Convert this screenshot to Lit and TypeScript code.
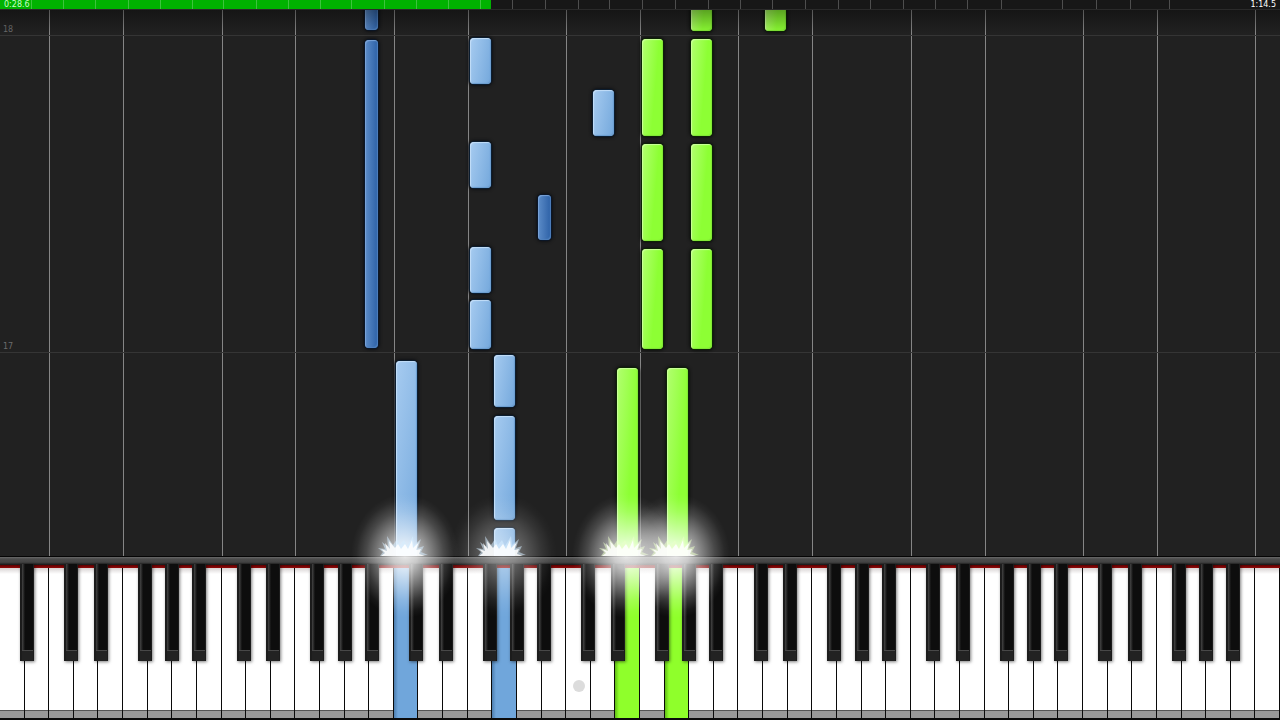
import { LitElement, html, svg, css } from "lit";
import { customElement, property } from "lit/decorators.js";
import { classMap } from "lit/directives/class-map.js";

const WHITE_COUNT = 52;
const HIT_Y = 556;
const SONG_SECONDS = 74.5;
const PLAYED_SECONDS = 28.6;

type Hand = "left" | "right";

interface Note {
  key: number; // white key index; for sharps the index of the key on the right
  sharp?: boolean;
  start: number; // distance above the hit line
  length: number;
  hand: Hand;
}

const note = (key: number, top: number, bottom: number, hand: Hand, sharp = false): Note => ({
  key,
  sharp,
  hand,
  start: HIT_Y - bottom,
  length: bottom - top,
});

const NOTES: Note[] = [
  note(15, -10, 30, "left", true),
  note(15, 40, 348, "left", true),
  note(22, 195, 240, "left", true),
  note(19, 38, 84, "left"),
  note(19, 142, 188, "left"),
  note(19, 247, 293, "left"),
  note(19, 300, 349, "left"),
  note(24, 90, 136, "left"),
  note(20, 355, 407, "left"),
  note(20, 416, 520, "left"),
  note(20, 528, 566, "left"),
  note(16, 361, 566, "left"),
  note(28, -10, 31, "right"),
  note(31, -10, 31, "right"),
  note(26, 39, 136, "right"),
  note(28, 39, 136, "right"),
  note(26, 144, 241, "right"),
  note(28, 144, 241, "right"),
  note(26, 249, 349, "right"),
  note(28, 249, 349, "right"),
  note(25, 368, 566, "right"),
  note(27, 368, 566, "right"),
];

const PRESSED = new Map<number, Hand>([
  [16, "left"],
  [20, "left"],
  [25, "right"],
  [27, "right"],
]);

const MEASURES = [
  31, 63, 95, 128, 160, 192, 223, 256, 288, 320, 351, 384, 416, 448, 480, 512, 545, 578, 609, 642,
  675, 708, 740, 772, 805, 838, 870, 903, 935, 967, 1001, 1062, 1096, 1130, 1169,
].map((x) => (x / 1280) * 100);

const BAR_LINES = [
  { label: "18", start: HIT_Y - 36 },
  { label: "17", start: HIT_Y - 353 },
];

const whites = Array.from({ length: WHITE_COUNT }, (_, i) => i);
// The lowest white key is an A, so index % 7 gives A B C D E F G.
const gridLines = whites.filter((i) => i % 7 === 2 || i % 7 === 5);
const sharpShift = [0, 2.5, 0, -2.5, 2.5, 0, -2.5];
const sharps = whites.filter((i) => i > 0 && i % 7 !== 2 && i % 7 !== 5);
const shiftOf = (i: number) => sharpShift[i % 7];
const percent = (i: number) => (i / WHITE_COUNT) * 100;

@customElement("song-progress")
class SongProgress extends LitElement {
  static styles = css`
    :host {
      display: block;
      position: relative;
      height: 10px;
      background: #171717;
      border-bottom: 1px solid #2a2a2a;
      box-sizing: border-box;
      color: #fff;
      font: 8px/10px "DejaVu Sans", sans-serif;
    }
    .bar {
      display: block;
      width: 100%;
      height: 9px;
      appearance: none;
      border: 0;
      background: #171717;
    }
    .bar::-webkit-progress-bar {
      background: #171717;
    }
    .bar::-webkit-progress-value {
      background: #00b200;
    }
    .tick {
      position: absolute;
      top: 0;
      width: 1px;
      height: 9px;
      background: #fff;
      opacity: 0.24;
    }
    .times {
      position: absolute;
      inset: 0;
      display: flex;
      justify-content: space-between;
      padding: 0 4px;
    }
    .elapsed {
      color: #c8ffc8;
    }
  `;

  render() {
    return html`
      <progress class="bar" aria-label="Song position" max=${SONG_SECONDS} value=${PLAYED_SECONDS}></progress>
      ${MEASURES.map((x) => html`<i class="tick" style="left:${x}%"></i>`)}
      <div class="times"><span class="elapsed">0:28.6</span><span>1:14.5</span></div>
    `;
  }
}

@customElement("note-roll")
class NoteRoll extends LitElement {
  static styles = css`
    :host {
      display: block;
      position: relative;
      overflow: hidden;
      background: #212121;
    }
    .lane {
      position: absolute;
      top: 0;
      bottom: 0;
      width: 1px;
      background: #858585;
    }
    .measure {
      position: absolute;
      left: 0;
      right: 0;
      box-sizing: border-box;
      padding-left: 3px;
      border-bottom: 1px solid #353535;
      color: #6c6c6c;
      font: 8px/11px "DejaVu Sans", sans-serif;
    }
    .note {
      position: absolute;
      width: 21px;
      margin-left: 2px;
      border-radius: 4px;
    }
    .note.sharp {
      width: 13px;
      margin-left: -4px;
    }
    .left {
      background: linear-gradient(100deg, #a6cbf0, #74a8dc);
      box-shadow: 0 0 0 1px #0b1d30, 0 0 3px 2px #101216, inset 1px 1px 1px #c4def8,
        inset -1px -1px 1px #6b9dcf;
    }
    .left.sharp {
      background: linear-gradient(90deg, #5c8cc8, #2c60a6);
      box-shadow: 0 0 0 1px #0a1628, 0 0 3px 2px #101216, inset 1px 1px 1px #7ba4d8,
        inset -1px -1px 1px #4f80bd;
    }
    .right {
      background: linear-gradient(95deg, #b2ff70, #8dff34 60%);
      box-shadow: 0 0 0 1px #0c2404, 0 0 3px 2px #101210, inset 1px 1px 1px #ceff9e,
        inset -1px -1px 1px #80e636;
    }
    .shade {
      position: absolute;
      inset: 0 0 auto;
      height: 24px;
      background: linear-gradient(rgba(0, 0, 0, 0.36), transparent);
    }
  `;

  render() {
    return html`
      ${gridLines.map((i) => html`<i class="lane" style="left:${percent(i)}%"></i>`)}
      ${BAR_LINES.map((b) => html`<div class="measure" style="bottom:${b.start}px">${b.label}</div>`)}
      ${NOTES.map(
        (n) => html`<div
          class=${classMap({ note: true, [n.hand]: true, sharp: !!n.sharp })}
          style="left:${percent(n.key)}%;bottom:${n.start}px;height:${n.length}px"
        ></div>`
      )}
      <div class="shade"></div>
    `;
  }
}

@customElement("piano-keyboard")
class PianoKeyboard extends LitElement {
  static styles = css`
    :host {
      display: block;
      position: relative;
    }
    .rail {
      height: 9px;
      box-sizing: border-box;
      border-top: 1px solid #050505;
      background: linear-gradient(#6a6a6a, #4b4b4b 25%, #444 65%, #161616);
    }
    .felt {
      height: 3px;
      background: linear-gradient(#5a0000, #940a0a);
    }
    .whites {
      display: grid;
      grid-template-columns: repeat(52, 1fr);
      height: 152px;
      background: #000;
    }
    .white {
      appearance: none;
      min-width: 0;
      margin: 0;
      padding: 0;
      border: 0 solid #0a0a0a;
      border-right-width: 1px;
      border-bottom-width: 2px;
      border-radius: 0;
      background: linear-gradient(#d9d3d3, #fff 6px, #fff 142px, #555 142px, #555 143px, #999 143px);
    }
    .white.left {
      background: linear-gradient(90deg, #4d7eaf, #70a6db 4px, #70a6db);
    }
    .white.right {
      background: linear-gradient(90deg, #60bd14, #8fff2b 4px, #8fff2b);
    }
    .black {
      position: absolute;
      top: 8px;
      width: 14px;
      height: 97px;
      margin: 0 0 0 -7px;
      padding: 0;
      appearance: none;
      border: 0 solid #1c1c1c;
      border-width: 0 1px 0 2px;
      border-radius: 0;
      background: linear-gradient(#222 0 0) 0 100% / 100% 10px no-repeat,
        linear-gradient(#484848 0 0) 0 86px / 100% 1px no-repeat,
        linear-gradient(90deg, #444, #222 2px, #0d0d0d 3px, #0d0d0d);
      box-shadow: 1px 1px 3px rgba(0, 0, 0, 0.5);
    }
    .pointer {
      position: absolute;
      left: 45%;
      top: 124px;
      width: 12px;
      height: 12px;
      margin-left: -3px;
      border-radius: 50%;
      background: #dcdcdc;
    }
  `;

  render() {
    return html`
      <div class="rail"></div>
      <div class="felt"></div>
      <div class="whites">
        ${whites.map((i) => {
          const hand = PRESSED.get(i);
          return html`<button
            class=${classMap({ white: true, left: hand === "left", right: hand === "right" })}
            aria-label="${"ABCDEFG"[i % 7]} key ${i + 1}"
          ></button>`;
        })}
      </div>
      ${sharps.map(
        (i) => html`<button
          class="black"
          aria-label="${"ABCDEFG"[(i + 6) % 7]} sharp"
          style="left:${percent(i + shiftOf(i) / 24.6)}%"
        ></button>`
      )}
      <i class="pointer"></i>
    `;
  }
}

@customElement("hit-spark")
class HitSpark extends LitElement {
  @property() tint = "#e8f6ff";
  @property({ type: Boolean, reflect: true }) soft = false;

  static styles = css`
    :host {
      position: absolute;
      width: 120px;
      height: 140px;
      margin-left: -49px;
      bottom: 94px;
      pointer-events: none;
    }
    .glow {
      position: absolute;
      inset: 0;
      background: radial-gradient(
        ellipse 54px 62px at center,
        rgba(255, 255, 255, 0.84),
        rgba(255, 255, 255, 0.72) 22%,
        rgba(255, 255, 255, 0.46) 46%,
        rgba(255, 255, 255, 0.18) 72%,
        rgba(255, 255, 255, 0.04) 90%,
        transparent
      );
    }
    :host([soft]) .glow {
      opacity: 0.5;
    }
    .burst {
      position: absolute;
      left: 33px;
      top: 48px;
      width: 50px;
      height: 22px;
      overflow: visible;
    }
  `;

  render() {
    return html`
      <div class="glow"></div>
      <svg class="burst" viewBox="0 0 50 22" aria-hidden="true">
        ${svg`
          <path fill=${this.tint} opacity=".55" d="M2 22 5 18 0 14 7 15 4 8 10 13 9 2 15 11 19 5 22 11 26 6 29 12 35 2 36 11 43 5 40 14 46 12 43 18 50 21Z"/>
          <path fill="#fff" opacity=".85" d="M3 22 7 19 3 15 9 17 7 9 12 15 11 7 17 14 20 10 23 15 27 10 30 15 34 6 35 14 41 8 38 16 43 15 41 20 47 22Z"/>`}
      </svg>
    `;
  }
}

@customElement("app-root")
class AppRoot extends LitElement {
  static styles = css`
    :host {
      display: flex;
      flex-direction: column;
      position: relative;
      height: 100vh;
      overflow: hidden;
      background: #212121;
    }
    .roll {
      flex: 1;
      min-height: 0;
    }
  `;

  render() {
    return html`
      <song-progress></song-progress>
      <note-roll class="roll"></note-roll>
      <piano-keyboard></piano-keyboard>
      ${[...PRESSED].map(
        ([key, hand]) => html`<hit-spark
          ?soft=${key === 20}
          tint=${hand === "left" ? "#d5edff" : "#eaffc8"}
          style="left:${percent(key)}%"
        ></hit-spark>`
      )}
    `;
  }
}
